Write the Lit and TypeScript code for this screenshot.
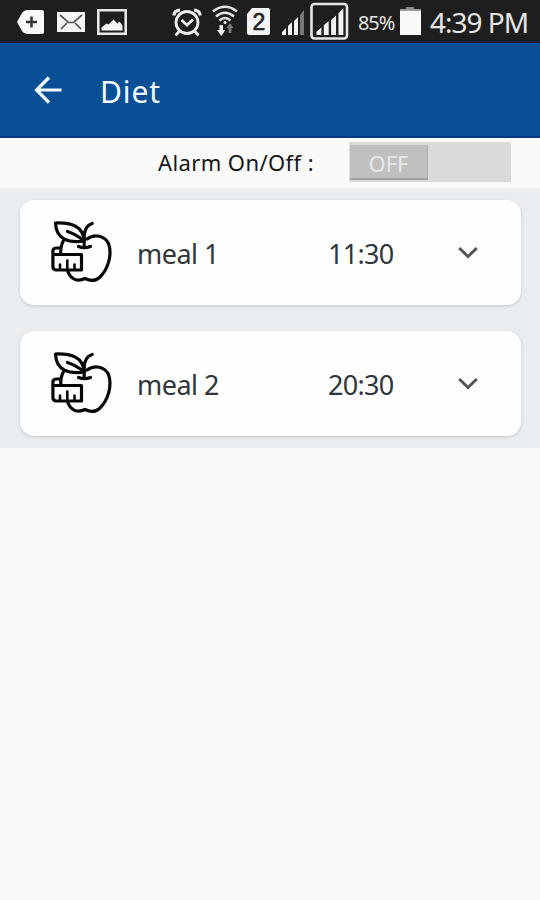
import { LitElement, html, css, svg } from "lit";
import { customElement, property } from "lit/decorators.js";

const bars = (last: string) => svg`
  <path d="M0 25v-3l4-4v7z M6 25v-9l4-4v13z M12 25v-14l4-4v18z" fill="#f2f2f2"/>
  <path d="M18 25V5l4-5v25z" fill="${last}"/>`;

@customElement("status-bar")
class StatusBar extends LitElement {
  static styles = css`
    :host { display: flex; height: 43px; background: #1f1e1e; color: #e6e6e6; }
    .icons { width: 350px; height: 43px; flex: none; }
    .pct { width: 48px; padding-left: 8px; box-sizing: border-box; font-size: 20px; line-height: 46px; letter-spacing: -1.1px; white-space: nowrap; }
    .batt { width: 24px; height: 43px; flex: none; }
    .time { padding-left: 8px; font-size: 28px; line-height: 44px; white-space: nowrap; letter-spacing: -1px; }
  `;
  render() {
    return html`
      <svg class="icons" viewBox="0 0 350 43" fill="none">
        <path d="M17 22l5-9q2-3 5-3h15q2 0 2 2v20q0 2-2 2H27q-3 0-5-3z" fill="#f8f8f8"/>
        <path d="M31.500 16.500v11M26 22h11" stroke="#333" stroke-width="2.500"/>
        <path d="M57 12h28v20H57z" fill="#f4f4f4"/>
        <path d="M60 15l8.500 7.500h5L82 15M61 29l6-6M81 29l-6-6" stroke="#555" stroke-width="1.700"/>
        <path d="M98.300 10.300h27.400v23.400H98.300z" stroke="#e8e8e8" stroke-width="2.600"/>
        <path d="M101.500 30.500v-3l5-4 2 1 5-5 4 4 2-2 3 4v5z" fill="#f4f4f4"/>
        <g stroke="#eee" stroke-width="2.800">
          <circle cx="187" cy="22.500" r="11"/>
          <path d="M181.500 20l5.500 5 6-5.500M179 31.500l-3.500 4M195 31.500l3.500 4"/>
          <path d="M174 15.500q0-5 6-5.500M200 15.500q0-5-6-5.500" stroke-width="3.200"/>
        </g>
        <g stroke="#e4e4e4" stroke-width="2.500">
          <path d="M213 11.500q12-9.500 24 0M216 16.500q9-7.500 18 0M219.500 20.500q5.500-5 11 0"/>
        </g>
        <circle cx="225" cy="22.500" r="1.500" fill="#eee"/>
        <path d="M219.500 25h3.500v5h2.500l-4.300 6-4.200-6h2.500z" fill="#eee"/>
        <path d="M228.500 33v-5h-2l3.500-5 3.500 5h-2v5z" fill="#777"/>
        <path d="M252 8h16q2 0 2 2v23q0 2-2 2h-19q-2 0-2-2V14z" fill="#f4f4f4"/>
        <text x="258.800" y="30" text-anchor="middle" font-family="Liberation Sans, sans-serif" font-size="23" fill="#222" stroke="#222" stroke-width="0.600">2</text>
        <g transform="translate(282 10)">${bars("#777")}</g>
        <rect x="311.500" y="4" width="35.500" height="34.500" rx="3" fill="#1f1e1e" stroke="#e6e6e6" stroke-width="2.600"/>
        <g transform="translate(316.500 8) scale(1.220 1.080)">${bars("#f2f2f2")}</g>
      </svg>
      <span class="pct">85%</span>
      <svg class="batt" viewBox="0 0 24 43">
        <path d="M8 7h8v3H8z" fill="#888"/><path d="M2 9.500h21V35H2z" fill="#fafafa"/><path d="M2 9h21v2H2z" fill="#999"/>
      </svg>
      <span class="time">4:39 PM</span>`;
  }
}

@customElement("meal-card")
class MealCard extends LitElement {
  @property() name = "";
  @property() time = "";
  static styles = css`
    :host { display: flex; align-items: center; height: 105px; background: #fefefe; border-radius: 14px; box-shadow: 0 1px 3px rgba(60, 70, 80, 0.24); color: #30363a; font-size: 27px; line-height: 36px; white-space: nowrap; }
    .apple { width: 80px; height: 80px; margin: 0 0 6px 20px; flex: none; }
    .name { width: 191px; margin-left: 17px; padding-top: 3px; letter-spacing: -0.5px; }
    .time { width: 120px; padding-top: 3px; letter-spacing: -0.7px; }
    .chev { width: 40px; height: 40px; }
  `;
  render() {
    return html`
      <svg class="apple" viewBox="0 0 80 80" fill="none" stroke="#080808" stroke-width="3.200" stroke-linecap="round" stroke-linejoin="round">
        <path d="M15.500 13c16-.5 27.500 3 28.700 18-15 2.500-28.200-1.500-28.700-18z"/>
        <path d="M27.500 21.500q10 3.500 16.500 9.500M44.200 37V27q0-11 8-13.500"/>
        <path d="M38.500 36.500q6 2.500 12 0"/>
        <path d="M23.300 31q-2.800 5-2.600 13M47 29c8-6 18-3 21.500 4.500 4 11-.5 26-9 34-5 4.500-9.500 3.500-14.500 1-7 3.500-14.500 1.500-17.500-8"/>
        <path d="M12.900 44.500V41q0-3 4-3h3.500M12.900 44.500h28.600v15.500H16q-3.100-.5-3.100-3.500z"/>
        <path d="M20 59v-4.500M27.300 59v-8.500M34.500 59v-4.500" stroke-width="2.600"/>
      </svg>
      <span class="name">${this.name}</span>
      <span class="time">${this.time}</span>
      <svg class="chev" viewBox="0 0 40 40" fill="none" stroke="#555" stroke-width="3"><path d="M11.200 15l8.800 8.500 8.800-8.500"/></svg>`;
  }
}

@customElement("app-root")
class AppRoot extends LitElement {
  static styles = css`
    :host { display: block; width: 540px; height: 900px; overflow: hidden; background: #fafafa; font-family: "Noto Sans", sans-serif; }
    .bar { display: flex; align-items: center; box-sizing: border-box; height: 95px; background: #094f95; border-bottom: 2px solid #063a80; color: #f2fbff; }
    .back { width: 32px; height: 32px; margin: 1px 0 0 32px; }
    .title { margin: 5px 0 0 36px; font-size: 30px; line-height: 40px; letter-spacing: 0.9px; }
    .alarm { display: flex; align-items: center; height: 50px; padding-left: 158px; }
    .label { width: 191px; margin-top: -3px; font-size: 22px; line-height: 30px; letter-spacing: 0.4px; color: #161616; white-space: nowrap; }
    .switch { width: 162px; height: 40px; background: #dadada; margin-top: -3px; box-sizing: border-box; padding: 3px 1px 1px; }
    .thumb { width: 78px; height: 35px; box-sizing: border-box; background: #c0c0c0; border-bottom: 2px solid #a0a0a0; border-right: 1px solid #adadad; color: #e8e8e8; font-size: 22px; line-height: 36px; text-align: center; letter-spacing: 0; }
    .list { display: flex; flex-direction: column; gap: 26px; box-sizing: border-box; height: 260px; padding: 12px 19px 0 20px; background: #e9edf0; }
  `;
  render() {
    return html`
      <status-bar></status-bar>
      <div class="bar">
        <svg class="back" viewBox="0 0 32 32" fill="none" stroke="#f2fbff" stroke-width="3.200"><path d="M29.500 16H4M17 3.500L4.500 16 17 28.500"/></svg>
        <span class="title">Diet</span>
      </div>
      <div class="alarm">
        <span class="label">Alarm On/Off :</span>
        <div class="switch"><div class="thumb">OFF</div></div>
      </div>
      <div class="list">
        <meal-card name="meal 1" time="11:30"></meal-card>
        <meal-card name="meal 2" time="20:30"></meal-card>
      </div>`;
  }
}
